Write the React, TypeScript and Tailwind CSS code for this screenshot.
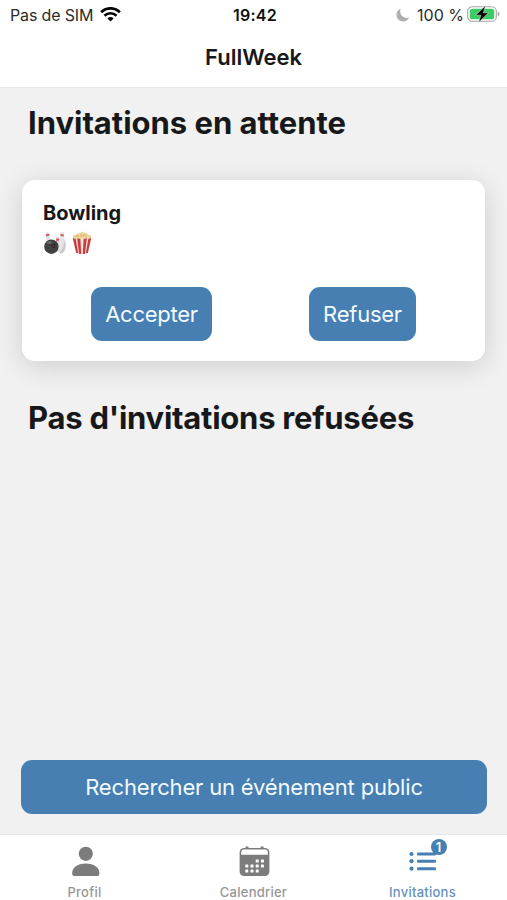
import type { ReactNode } from "react";

function StatusBar() {
  return (
    <div className="grid h-[30px] grid-cols-3 items-center pl-[10px] pr-[7px] text-[16px] leading-[30px] text-[#2b2b2b]">
      <div className="flex items-center gap-[7px]">
        <span className="whitespace-nowrap tracking-[-0.15px]">Pas de SIM</span>
        <svg className="-mt-[2px] h-[15px] w-[21px]" viewBox="0 0 21 15" fill="none" stroke="#050505">
          <path d="M1.2 5.2a13.3 13.3 0 0 1 18.6 0" strokeWidth="2.9" />
          <path d="M4.5 8.7a8.6 8.6 0 0 1 12 0" strokeWidth="2.7" />
          <path d="M10.5 14.5 7.4 11.4a4.4 4.4 0 0 1 6.2 0Z" fill="#050505" stroke="none" />
        </svg>
      </div>
      <span className="text-center font-semibold tracking-[0.25px] text-[#111]">19:42</span>
      <div className="flex items-center justify-end">
        <svg className="mr-[7px] h-[14px] w-[14px]" viewBox="0 0 14 14" fill="#b0b0b0">
          <path d="M4.6.8C-.2 2.6-.8 8.6 2.7 11.7c3.3 3 8.6 1.9 10.5-2.2C7.6 11.2 2.8 6.6 4.6.8Z" />
        </svg>
        <span className="mr-[3px] whitespace-nowrap">100 %</span>
        <svg className="-mt-[2px] h-[18px] w-[33px]" viewBox="0 0 33 18">
          <rect x="0.7" y="1.7" width="28.6" height="14.6" rx="4.6" fill="#fff" stroke="#a5a5a5" strokeWidth="1.1" />
          <rect x="2.8" y="3.7" width="24.4" height="10.6" rx="2.6" fill="#3ccb64" />
          <path d="M30.8 6.6q1.8.8 1.8 2.4t-1.8 2.4Z" fill="#a5a5a5" />
          <path d="m18.4.8-9.8 9.4h5.2l-2.2 7.2 9.9-9.6h-5.2Z" fill="#050505" stroke="#d9f3df" strokeWidth="0.5" />
        </svg>
      </div>
    </div>
  );
}

function BowlingIcon() {
  return (
    <svg className="h-6 w-6" viewBox="0 0 24 24">
      <path d="M3 1c2-.8 3.5.4 3.3 2.6-.2 2 2 4 2 7H3c0-4 .7-5 0-7Z" fill="#e6e3e6" />
      <path d="m2.8 3.2 3.5-.5.1 2-3.2.7Z" fill="#cf5c62" />
      <path d="M13 6c2-1 3.7.4 3.4 2.3-.2 2 .8 4 .5 7h-5c0-4 1.6-5 1.1-7Z" fill="#dedbde" />
      <path d="m13 7.8 3.4-.4v2l-3.3.5Z" fill="#cf5c62" />
      <path d="M17.3 1.8c1-1.4 3.2-1.2 3.7.3.4 1.4-.4 2.3.1 4.4.6 2.5 2.6 5 2.2 9-.2 3.2-1.5 6-4.2 6.8-3.2 0-5.8-2.2-5.6-5.4.2-4.5 3.8-6.2 4-10.3.1-2-.8-3-.2-4.8Z" fill="#e6e4e6" />
      <path d="m17.3 3 3.5.6-.2 2-3-.5Z" fill="#cf5c62" />
      <path d="M20.8 9c2.2 4 1.9 9.7-1.7 13.3-1 .1-2-.2-2.9-.7 4-3.1 5.2-7.5 4.6-12.6Z" fill="#c8c5c9" />
      <circle cx="8.4" cy="15.7" r="7.2" fill="#414141" />
      <ellipse cx="6.2" cy="11.6" rx="2.8" ry="1.5" fill="#666" />
      <circle cx="9" cy="14" r="0.8" fill="#171717" />
      <circle cx="11.6" cy="13.8" r="0.8" fill="#171717" />
      <circle cx="10.7" cy="16.4" r="0.8" fill="#171717" />
    </svg>
  );
}

function PopcornIcon() {
  return (
    <svg className="h-6 w-6" viewBox="0 0 24 24">
      <path d="M3 7c-.7-2.4 1.5-3.6 3-3C7 1.7 9 2 10 2.5 11.2.1 14 .4 14.6 2.2c2-.5 3.5.4 3.5 2C20.3 3.7 21.7 5.3 21 7l-2 3H5Z" fill="#efd59a" />
      <path d="M6 6.2c0-1.5 2.3-2 3-.8m1-2.2c1.4.1 1.9 1.3 1.2 2.6m2-.2c.2-1.9 2.5-2 3-.5m-7 2.5 1-1m5 1 1.5-1" fill="none" stroke="#d0a84f" strokeWidth="0.9" />
      <path d="m2.8 7.1 2.5 1 2.2-.8 2.4 1 2.1-.8 2.2.8 2.4-1 2.1.8 2.5-1-3.3 14.6q-5.9 2.5-11.8 0Z" fill="#eee4df" />
      <path d="m2.8 7.1 2.9 1L8.2 22.4l-2.1-.7ZM7.2 7.3l3.2 1 .8 14.6-2.2-.2ZM13.6 8.3l3.2-1-1.8 15.4-2.2.2ZM18.3 8.1l2.9-1-3.3 14.6-2.1.7Z" fill="#c93b3d" />
    </svg>
  );
}

function PersonIcon() {
  return (
    <svg className="h-8 w-8" viewBox="0 0 32 32" fill="#7c7c7c">
      <circle cx="16.8" cy="8.8" r="7.1" />
      <path d="M3.2 29c-.6-6 5-10.4 13.6-10.4S31 23 30.4 29q-.1 2-1.8 2H5q-1.7 0-1.8-2Z" />
    </svg>
  );
}

// centers of the day squares
const DAYS = [
  [19.2, 16],
  [24.4, 16],
  [8.8, 21],
  [14, 21],
  [19.2, 21],
  [24.4, 21],
  [8.8, 26],
  [14, 26],
  [19.2, 26],
];

function CalendarIcon() {
  return (
    <svg className="h-8 w-8" viewBox="0 0 32 32">
      <path d="M7.5 1.5h3v3h-3zM22.6 1.5h3v3h-3z" fill="#7c7c7c" />
      <rect x="1.6" y="3" width="29.8" height="28" rx="4.4" fill="#7c7c7c" />
      <path d="M3.2 6.8q.3-2.3 2.5-2.3h21.6q2.2 0 2.5 2.3v3H3.2Z" fill="#fff" />
      {DAYS.map(([x, y]) => (
        <rect key={`${x}-${y}`} x={x - 1.5} y={y - 1.5} width="3" height="3" rx="0.5" fill="#fff" />
      ))}
    </svg>
  );
}

function ListIcon() {
  return (
    <svg className="h-8 w-8" viewBox="0 0 32 32" fill="#477fb3">
      <circle cx="4.5" cy="9" r="2.1" />
      <circle cx="4.5" cy="16.2" r="2.1" />
      <circle cx="4.5" cy="23.7" r="2.1" />
      <rect x="10" y="7.6" width="19" height="2.9" rx="1" />
      <rect x="10" y="14.8" width="19" height="2.9" rx="1" />
      <rect x="10" y="22.3" width="19" height="2.9" rx="1" />
    </svg>
  );
}

function Tab({ label, active, children }: { label: string; active?: boolean; children: ReactNode }) {
  return (
    <button className={`flex flex-col items-center pt-[10px] ${active ? "text-[#6891bd]" : "text-[#969696]"}`}>
      <span className="relative flex h-8 w-8 items-center justify-center">{children}</span>
      <span className="mt-[5px] text-[13px] font-medium leading-[20px] tracking-[0.25px]">{label}</span>
    </button>
  );
}

export default function App() {
  return (
    <div className="flex h-[900px] w-[507px] flex-col overflow-hidden bg-[#f1f1f1] font-['Inter','Liberation_Sans',sans-serif] text-[#17181a]">
      <header className="h-[88px] shrink-0 border-b border-[#e6e6e6] bg-white">
        <StatusBar />
        <h1 className="pt-[12px] text-center text-[22px] font-semibold leading-[30px]">FullWeek</h1>
      </header>

      <main className="flex flex-1 flex-col px-[21px]">
        <h2 className="mt-[15px] pl-[7px] text-[31px] font-bold leading-[40px] tracking-[-0.02px]">Invitations en attente</h2>

        <section className="mx-px mt-[37px] h-[181px] rounded-[13px] bg-white px-[21px] pt-[20px] shadow-[0_5px_28px_rgba(0,0,0,0.15)]">
          <h3 className="text-[20px] font-bold leading-[26px]">Bowling</h3>
          <div className="mt-[5px] flex gap-[3px]">
            <BowlingIcon />
            <PopcornIcon />
          </div>
          <div className="mt-[32px] flex justify-between pl-[48px] pr-[48px]">
            <button className="h-[54px] w-[121px] rounded-[11px] bg-[#477fb3] text-[22px] tracking-[-0.25px] text-[#f2fbff]">Accepter</button>
            <button className="h-[54px] w-[107px] rounded-[11px] bg-[#477fb3] text-[22px] tracking-[-0.25px] text-[#f2fbff]">Refuser</button>
          </div>
        </section>

        <h2 className="mt-[37px] pl-[7px] text-[31px] font-bold leading-[40px] tracking-[-0.25px]">Pas d'invitations refusées</h2>

        <button className="mb-[20px] mt-auto h-[54px] w-[466px] shrink-0 rounded-[11px] bg-[#477fb3] text-[22px] tracking-[-0.17px] text-[#f2fbff]">
          Rechercher un événement public
        </button>
      </main>

      <nav className="grid h-[66px] shrink-0 grid-cols-3 border-t border-[#e6e6e6] bg-white">
        <Tab label="Profil">
          <PersonIcon />
        </Tab>
        <Tab label="Calendrier">
          <CalendarIcon />
        </Tab>
        <Tab label="Invitations" active>
          <ListIcon />
          <span className="absolute left-[24px] top-[-6px] h-[16px] w-[16px] rounded-full bg-[#477fb3] text-center text-[13px] font-semibold leading-[16px] text-white">
            1
          </span>
        </Tab>
      </nav>
    </div>
  );
}
